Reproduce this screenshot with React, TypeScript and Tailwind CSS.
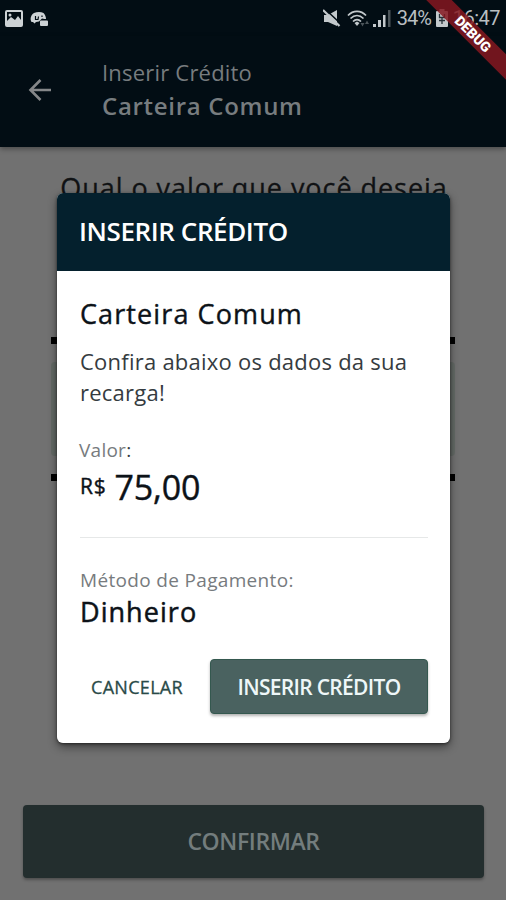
function StatusBar() {
  return (
    <div className="flex h-9 items-center bg-[#020d14] font-[Roboto,sans-serif] text-[20px] text-[#b9bfc2]">
      <svg className="ml-[5px] h-[17px] w-[18px]" viewBox="0 0 18 17">
        <path fillRule="evenodd" fill="#cdd2d5" d="M2 0h14a2 2 0 0 1 2 2v13a2 2 0 0 1-2 2H2a2 2 0 0 1-2-2V2a2 2 0 0 1 2-2Zm0 2v9l4-4 4 3 3-4 3 4V2ZM5 3.500a1.500 1.500 0 1 1 0 3 1.500 1.500 0 0 1 0-3Z" />
      </svg>
      <svg className="mt-[2px] ml-[7px] h-[16px] w-[18px]" viewBox="0 0 18 16">
        <path fill="#cdd2d5" d="M4 2C7 .5 11 .5 13.500 2 15 3.500 16 5.500 16 8h-1.500L12 7.500 9 10.500 6 11 4.500 12.500 3 11H1.500C-.5 8.500 1 3.500 4 2ZM11 9.500h6q1 0 1 1V14q0 1-1 1h-6q-1 0-1-1v-3.500q0-1 1-1Z" />
        <path fill="none" stroke="#020d14" strokeWidth="1.200" d="M5.500 5v3.500h2.500L8.500 5.500M12 4.500v1.500" />
      </svg>
      <div className="grow" />
      <svg className="h-[19px] w-[18px]" viewBox="0 0 18 19">
        <path fill="#c3c9cc" d="M1 6h4l9-5v16l-9-4H1Z" />
        <path stroke="#020d14" strokeWidth="1.500" d="M2.500 .5 19 16" />
        <path stroke="#c3c9cc" strokeWidth="2.200" d="m0 1 16.500 16" />
      </svg>
      <svg className="ml-1.5 h-[19px] w-[24px]" viewBox="0 0 24 19" fill="none" stroke="#c3c9cc" strokeWidth="1.700">
        <path d="M1 6.500C6 1 14 1 19 6.500M3.500 9.500c4-4 9-4 13 0M6 12.500c2.500-2.500 5.500-2.500 8 0" />
        <path fill="#c3c9cc" stroke="none" d="m7.500 14 2.500-1.500 2.500 1.500-2.500 3Z" />
        <path fill="#4b5459" stroke="none" d="m13.500 14 2 3.500 2-3.500ZM18 15l2-3.500 2 3.500Z" />
      </svg>
      <svg className="ml-0.5 h-[18px] w-[18px]" viewBox="0 0 18 18">
        <path fill="#c3c9cc" d="M0 15h3v3H0ZM5 11h3v7H5ZM10 6h2.500v12H10Z" />
        <path fill="#4b5459" d="M15 1h2.500v17H15Z" />
      </svg>
      <span className="ml-[6px] w-[34px] whitespace-nowrap tracking-[-0.9px]">34%</span>
      <svg className="ml-[5px] h-[18px] w-[12px] shrink-0" viewBox="0 0 12 18">
        <path fill="#c3c9cc" d="M3.500 0h5v2H11q1 0 1 1v14q0 1-1 1H1q-1 0-1-1V3q0-1 1-1h2.500Z" />
        <path fill="none" stroke="#263138" strokeWidth="1.300" d="M3.500 5v3.500h5V5M6 8v3M3 11.500h6M6 12v3" />
      </svg>
      <span className="mr-[6px] ml-[5px] tracking-[-0.5px]">16:47</span>
    </div>
  );
}

function AppBar() {
  return (
    <header className="flex h-[111px] items-start bg-[#020d14] pl-7 text-[#777c7f] shadow-[0_2px_5px_rgba(0,0,0,0.35)]">
      <svg className="mt-[42px] h-6 w-6" viewBox="0 0 24 24" fill="none" stroke="#858789" strokeWidth="2.600">
        <path d="M23 12H3M12.500 2 2.500 12l10 10" />
      </svg>
      <div className="ml-[50px] flex flex-col pt-5">
        <span className="text-[22px] leading-[33px] tracking-[0.200px]">Inserir Crédito</span>
        <span className="text-[24px] leading-[33px] font-semibold tracking-[0.700px]">Carteira Comum</span>
      </div>
    </header>
  );
}

function Marks() {
  return (
    <div className="flex h-[7px] justify-between">
      <i className="w-2 bg-black" />
      <i className="w-2 bg-black" />
    </div>
  );
}

function CreditDialog() {
  return (
    <section className="absolute top-[193px] left-[57px] flex h-[550px] w-[393px] flex-col overflow-hidden rounded-[6px] bg-white text-[#0c1218]">
      <h2 className="h-[78px] bg-[#04202d] pl-[22px] text-[26px] leading-[76px] font-semibold tracking-[-0.400px] text-white">INSERIR CRÉDITO</h2>
      <div className="flex flex-col pt-[26px] pr-[22px] pl-[23px]">
        <h3 className="text-[27px] leading-[34px] tracking-[1.100px] [-webkit-text-stroke:0.4px]">Carteira Comum</h3>
        <p className="mt-[15px] -mr-2 text-[22px] leading-[31px] tracking-[0.240px] text-[#353b40]">
          Confira abaixo os dados da sua recarga!
        </p>
        <span className="mt-[30px] -ml-px text-[19px] leading-[24px] tracking-[0.250px] text-[#777b7e]">
          Valor<span className="text-[#353b40]">:</span>
        </span>
        <div className="mt-[5px] flex items-baseline leading-[40px] [-webkit-text-stroke:0.4px]">
          <span className="relative -top-[6px] text-[21px] tracking-[0.800px]">R$</span>
          <span className="ml-[8px] text-[34px] tracking-[-0.200px]">75,00</span>
        </div>
        <hr className="mt-[25px] border-[#e6e8e8]" />
        <span className="mt-[30px] text-[19px] leading-[24px] tracking-[0.330px] text-[#777b7e]">Método de Pagamento:</span>
        <strong className="mt-[3px] text-[27px] leading-[34px] font-normal tracking-[1.050px] [-webkit-text-stroke:0.5px]">Dinheiro</strong>
      </div>
      <div className="mt-[30px] flex h-[55px] pr-[22px]">
        <button className="w-[153px] pt-[2px] pl-[7px] text-[18px] tracking-[0.300px] text-[#2a4a48] [-webkit-text-stroke:0.3px]">CANCELAR</button>
        <button className="grow rounded-[4px] border border-[#34584f] bg-[#4a6260] pt-[3px] text-[21px] font-semibold tracking-[-0.700px] text-[#eef7f8] shadow-[0_2px_3px_rgba(0,0,0,0.3)]">
          INSERIR CRÉDITO
        </button>
      </div>
    </section>
  );
}

export default function App() {
  return (
    <div className="relative flex h-[900px] w-[506px] flex-col overflow-hidden bg-[#717171] font-['Open_Sans',sans-serif]">
      <StatusBar />
      <AppBar />
      <main className="flex grow flex-col">
        <h1 className="mt-[24px] pl-[2px] text-center text-[27px] leading-[34px] tracking-[0.950px] whitespace-nowrap text-[#101214] [-webkit-text-stroke:0.3px]">Qual o valor que você deseja</h1>
        <div className="mx-[51px] mt-[132px]">
          <Marks />
          <div className="my-[18px] h-[94px] rounded-[4px] bg-[#646a66] px-px" />
          <Marks />
        </div>
        <div className="grow" />
        <button className="mr-[22px] mb-[22px] ml-[23px] h-[73px] rounded-[4px] bg-[#232e2e] text-[23px] font-semibold tracking-[-0.400px] text-[#737d7d] shadow-[0_2px_3px_rgba(0,0,0,0.3)]">CONFIRMAR</button>
      </main>
      <div className="absolute top-[193px] left-[57px] h-[550px] w-[393px] rounded-[6px] shadow-[0_4px_10px_rgba(0,0,0,0.45),0_1px_3px_rgba(0,0,0,0.5)]" />
      <CreditDialog />
      <div className="absolute top-[25px] left-[398px] flex h-[18px] w-[150px] rotate-45 items-center justify-center bg-[#851820]/85 font-[Roboto,sans-serif] text-[14px] font-black text-white">
        DEBUG
      </div>
    </div>
  );
}
